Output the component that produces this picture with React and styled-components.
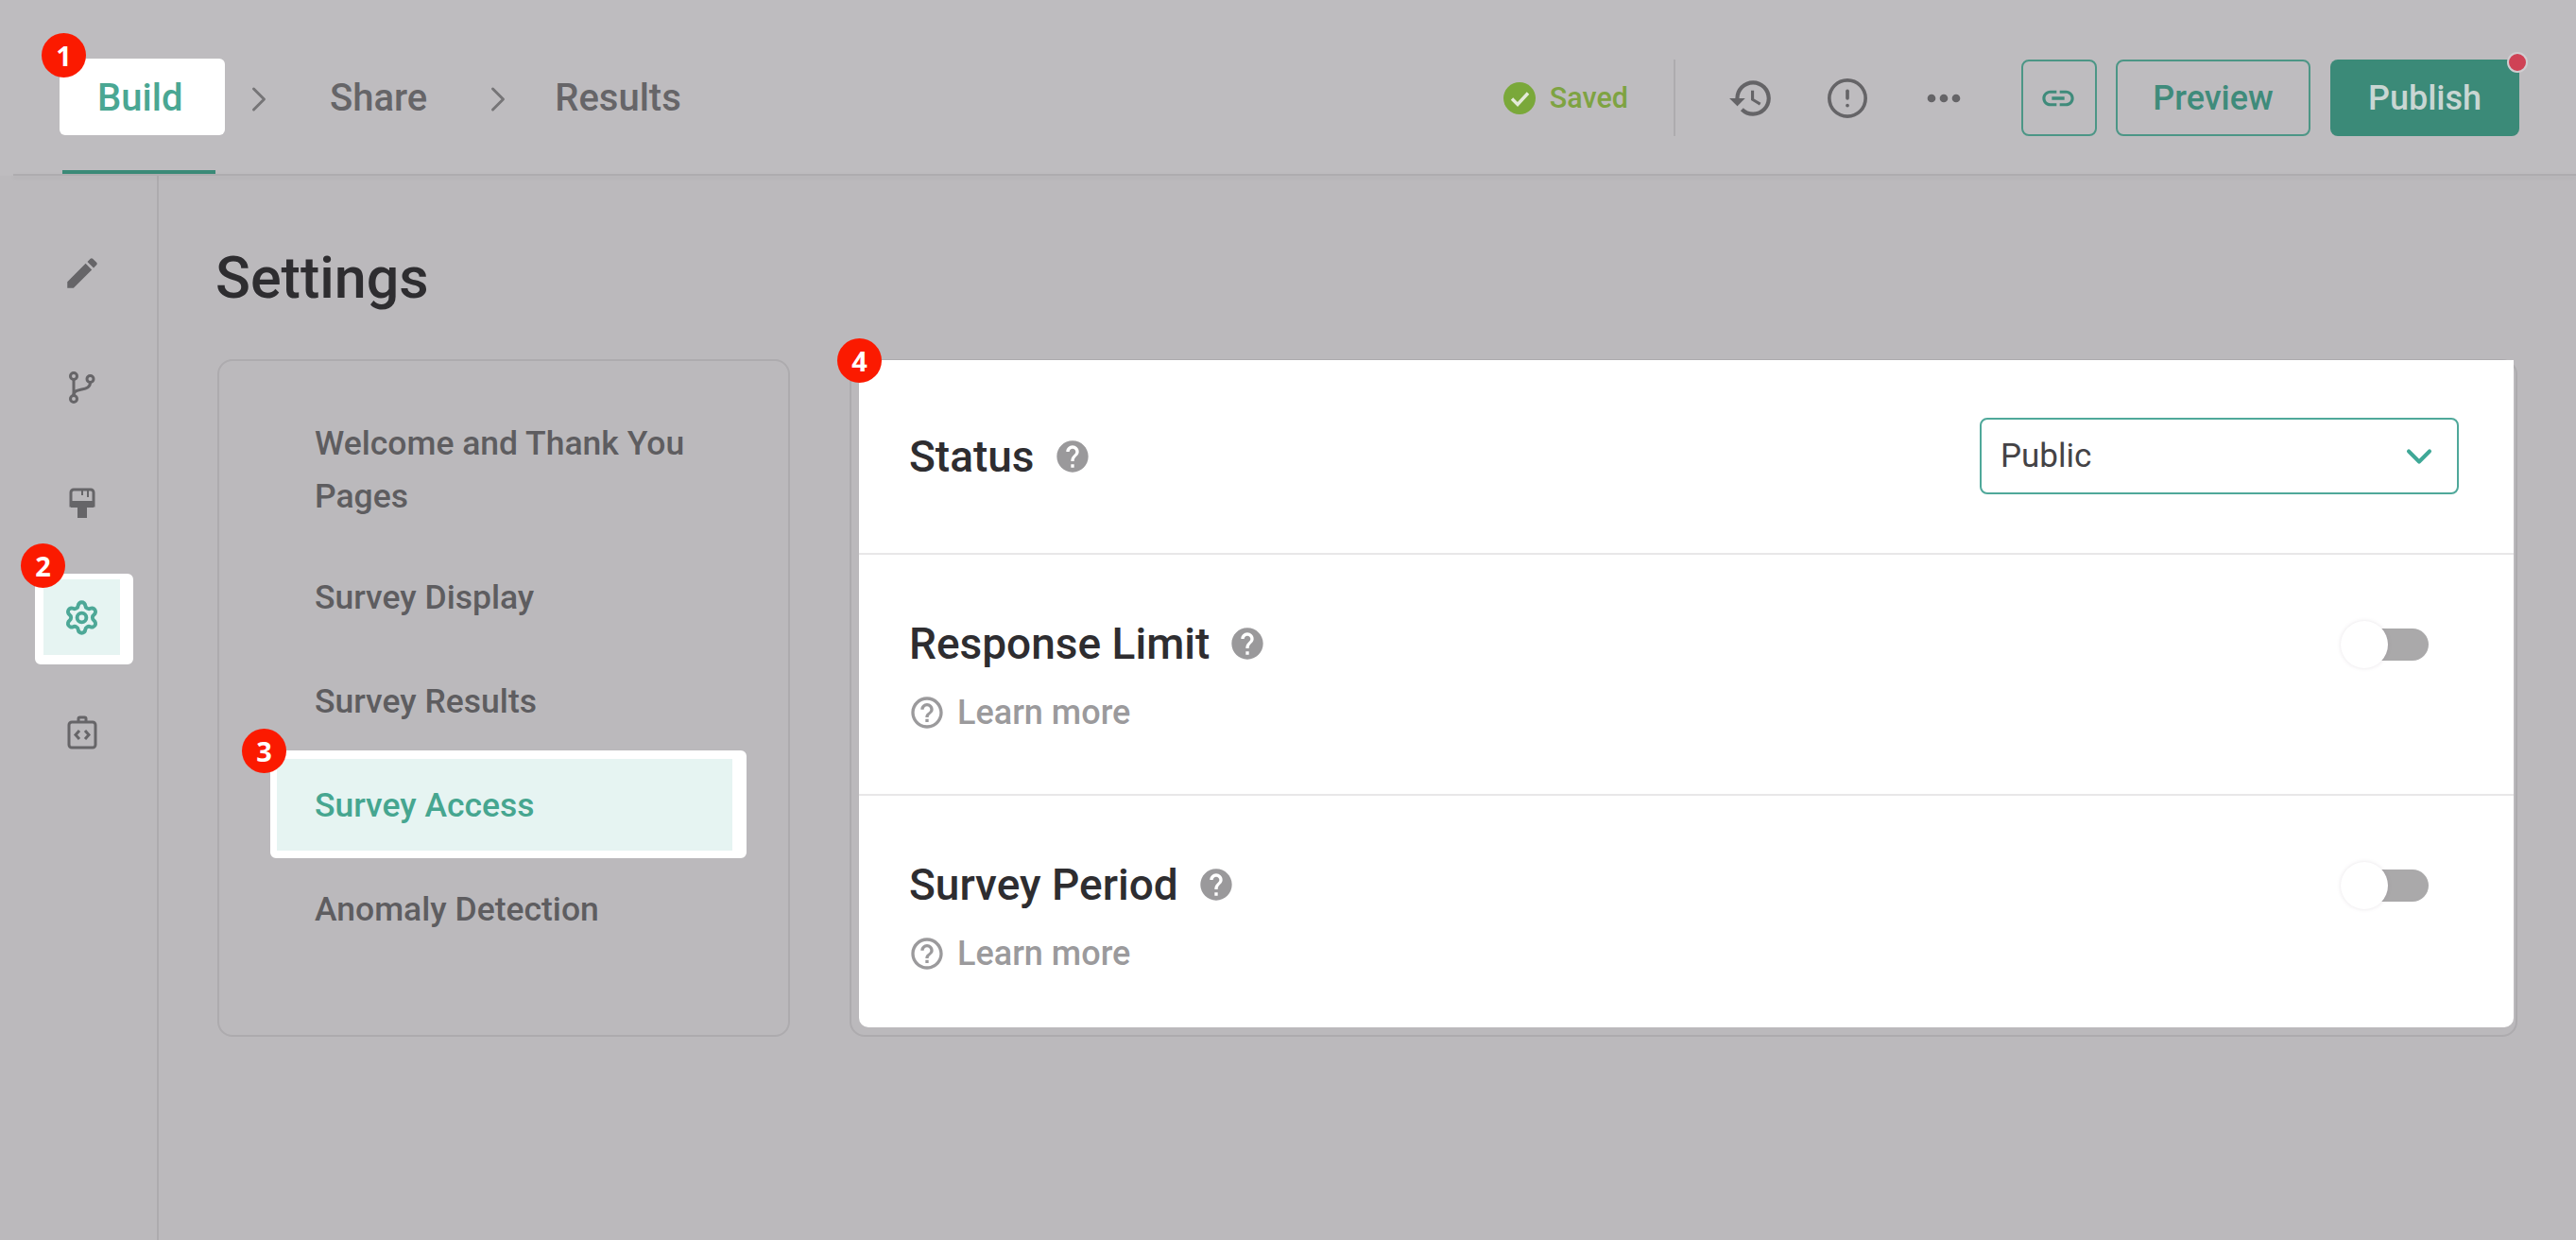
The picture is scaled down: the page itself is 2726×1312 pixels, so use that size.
import React from "react";
import styled, { createGlobalStyle } from "styled-components";
import { ChevronRight, ChevronDown, CircleAlert, Settings as SettingsGear } from "lucide-react";
import { MdEdit, MdHistory, MdMoreHoriz, MdLink, MdHelp, MdHelpOutline } from "react-icons/md";

const Global = createGlobalStyle`
  html, body { margin: 0; padding: 0; background: #bbb9bc; }
  body { font-family: Roboto, "Liberation Sans", sans-serif; width: 2726px; height: 1312px; overflow: hidden; }
  * { box-sizing: border-box; }
`;

const Page = styled.div`
  width: 2726px;
  height: 1312px;
  display: flex;
  flex-direction: column;
  background: #bbb9bc;
`;

const Header = styled.header`
  position: relative;
  height: 186px;
  padding: 62px 60px 0 63px;
  display: flex;
  align-items: flex-start;
  flex-shrink: 0;
  background: #bebcbf;
  &::after {
    content: "";
    position: absolute;
    left: 14px;
    right: 0;
    bottom: 0;
    height: 2px;
    background: #aeacaf;
    box-shadow: 0 2px 5px rgba(0, 0, 0, 0.06);
  }
`;

const Badge = styled.span`
  position: absolute;
  left: ${(p) => p.$left}px;
  top: ${(p) => p.$top}px;
  width: 47px;
  height: 47px;
  border-radius: 50%;
  background: #fb1a00;
  color: #fff;
  font-family: "Open Sans", sans-serif;
  font-size: 29px;
  font-weight: 700;
  display: flex;
  align-items: center;
  justify-content: center;
  z-index: 3;
`;

const ActiveStep = styled.div`
  position: relative;
  width: 175px;
  height: 81px;
  padding: 2px 0 0 40px;
  background: #fff;
  border-radius: 6px;
  display: flex;
  align-items: center;
  color: #4aa793;
  font-size: 40px;
  font-weight: 500;
  &::after {
    content: "";
    position: absolute;
    left: 3px;
    top: 118px;
    width: 162px;
    height: 4px;
    background: #3b8a78;
  }
`;

const Step = styled.div`
  height: 81px;
  padding-top: 2px;
  margin-left: ${(p) => p.$left}px;
  display: flex;
  align-items: center;
  color: #666568;
  font-size: 40px;
  font-weight: 500;
`;

const StepChevron = styled(ChevronRight)`
  flex-shrink: 0;
  margin-top: 21px;
  margin-left: ${(p) => p.$left}px;
  color: #767577;
`;

const Actions = styled.div`
  margin-left: auto;
  margin-top: 1px;
  height: 81px;
  display: flex;
  align-items: center;
`;

const SavedIcon = styled.svg`
  width: 34px;
  height: 34px;
  flex-shrink: 0;
`;

const SavedLabel = styled.span`
  margin-left: 15px;
  color: #7ea342;
  font-size: 30.5px;
  font-weight: 500;
`;

const VDivider = styled.span`
  width: 2px;
  height: 81px;
  margin: 0 29.5px 0 47.5px;
  background: #adabae;
`;

const ToolSlot = styled.span`
  width: 102px;
  display: flex;
  align-items: center;
  justify-content: center;
  color: #656467;
`;

const OutlineButton = styled.button`
  width: ${(p) => p.$width}px;
  height: 81px;
  margin-left: ${(p) => p.$left}px;
  padding: ${(p) => (p.$icon ? "0 3px 0 0" : "0")};
  border: 2px solid #4c9686;
  border-radius: 8px;
  background: transparent;
  color: #3f8b7b;
  font-family: inherit;
  font-size: 36px;
  font-weight: 500;
  display: flex;
  align-items: center;
  justify-content: center;
`;

const PublishButton = styled.button`
  position: relative;
  width: 200px;
  height: 81px;
  margin-left: 21px;
  padding: 0;
  border: 0;
  border-radius: 8px;
  background: #3b8a78;
  color: #c9d6d3;
  font-family: inherit;
  font-size: 36px;
  font-weight: 500;
  &::after {
    content: "";
    position: absolute;
    left: 187px;
    top: -8px;
    width: 18px;
    height: 18px;
    border-radius: 50%;
    background: #cf4255;
    border: 2px solid #d0ced1;
  }
`;

const Body = styled.div`
  flex: 1;
  display: flex;
  min-height: 0;
`;

const Sidebar = styled.nav`
  width: 168px;
  flex-shrink: 0;
  padding: 42px 0 0 37px;
  border-right: 2px solid #adabae;
  display: flex;
  flex-direction: column;
`;

const SideSlot = styled.div`
  width: 99px;
  height: 121.5px;
  display: flex;
  align-items: center;
  justify-content: center;
  color: #666568;
  flex-shrink: 0;
`;

const SideTile = styled.div`
  position: relative;
  box-sizing: content-box;
  width: 81px;
  height: 80px;
  flex-shrink: 0;
  margin: 4px 0 0 5px;
  border-style: solid;
  border-width: 6px 14px 10px 9px;
  border-color: #fff;
  border-radius: 6px;
  background: #e6f4f2;
  background-clip: padding-box;
  color: #4da897;
  display: flex;
  align-items: center;
  justify-content: center;
`;

const Main = styled.main`
  flex: 1;
  padding-left: 62px;
  min-width: 0;
`;

const Title = styled.h1`
  margin: 78px 0 55.5px -2px;
  font-size: 61px;
  line-height: 60px;
  font-weight: 500;
  color: #2e2d30;
`;

const Columns = styled.div`
  display: flex;
  align-items: flex-start;
`;

const SectionNav = styled.div`
  width: 606px;
  height: 717px;
  padding: 37.5px 0 0 61px;
  border: 2px solid #adabae;
  border-radius: 16px;
  flex-shrink: 0;
`;

const NavItem = styled.div`
  width: 482px;
  padding: 21.5px 40px;
  margin-bottom: ${(p) => (p.$tall ? 9 : 13)}px;
  font-size: 35.5px;
  line-height: ${(p) => (p.$tall ? 56 : 54)}px;
  font-weight: 500;
  color: #5e5d60;
`;

const ActiveNavItem = styled.div`
  position: relative;
  box-sizing: content-box;
  width: 442px;
  height: 97px;
  margin: -9px 0 5px -7px;
  padding-left: 40px;
  border-style: solid;
  border-width: 9px 15px 8px 7px;
  border-color: #fff;
  border-radius: 6px;
  background: #e6f4f2;
  background-clip: padding-box;
  display: flex;
  align-items: center;
  font-size: 35.5px;
  line-height: 54px;
  font-weight: 500;
  color: #46a690;
`;

const CardFrame = styled.div`
  position: relative;
  width: 1765px;
  height: 717px;
  margin-left: 63px;
  padding: 1px 3px 5.5px 9px;
  border: 2px solid #adabae;
  border-radius: 16px;
  flex-shrink: 0;
`;

const Card = styled.section`
  height: 100%;
  margin: -2px -1px 0 -1px;
  background: #fff;
  border-radius: 0 0 10px 10px;
  display: flex;
  flex-direction: column;
`;

const Row = styled.div`
  height: ${(p) => p.$height}px;
  padding: ${(p) => (p.$center ? 0 : 67)}px 58px 0 53px;
  display: flex;
  justify-content: space-between;
  align-items: ${(p) => (p.$center ? "center" : "flex-start")};
  border-bottom: ${(p) => (p.$last ? "0" : "2px solid #e8e7e8")};
  flex-shrink: 0;
`;

const RowTitle = styled.div`
  display: flex;
  align-items: center;
  gap: 20px;
  height: 54px;
  color: #2e2d30;
  font-size: 46px;
  font-weight: 500;
`;

const HelpDot = styled(MdHelp)`
  color: #9a999b;
  flex-shrink: 0;
`;

const LearnMore = styled.div`
  display: flex;
  align-items: center;
  gap: 12px;
  height: 40px;
  margin: 26px 0 0 -1px;
  color: #9b9a9c;
  font-size: 36px;
  font-weight: 500;
`;

const SelectBox = styled.div`
  width: 507px;
  height: 81px;
  padding: 0 18px 0 20px;
  border: 2px solid #4fa89a;
  border-radius: 8px;
  display: flex;
  align-items: center;
  justify-content: space-between;
  color: #444346;
  font-size: 35px;
`;

const SwitchTrack = styled.div`
  position: relative;
  width: 93px;
  height: 50px;
  margin: 2.5px 32px 0 0;
  flex-shrink: 0;
  &::before {
    content: "";
    position: absolute;
    right: 0;
    top: 8px;
    width: 70px;
    height: 34px;
    border-radius: 17px;
    background: #aaa9aa;
  }
  &::after {
    content: "";
    position: absolute;
    left: 0;
    top: 0;
    width: 50px;
    height: 50px;
    border-radius: 50%;
    background: #fff;
    box-shadow: 0 0 4px rgba(120, 100, 120, 0.18);
  }
`;

function BranchIcon() {
  return (
    <svg width="30" height="34" viewBox="0 0 30 34" fill="none" stroke="currentColor" strokeWidth="3">
      <circle cx="6" cy="5" r="3.5" />
      <circle cx="6" cy="29" r="3.5" />
      <circle cx="23.5" cy="8" r="3.5" />
      <path d="M6 8.5V25.5" />
      <path d="M23.5 11.5C23.5 17 19 18 14.5 19C10 20 6 20.5 6 25" />
    </svg>
  );
}

function BrushIcon() {
  return (
    <svg width="28" height="34" viewBox="0 0 28 34" fill="none">
      <path d="M2 6a3 3 0 0 1 3-3h18a3 3 0 0 1 3 3v14H2z" stroke="currentColor" strokeWidth="3" />
      <rect x="2" y="15" width="24" height="7" fill="currentColor" />
      <path d="M14 4v5M20 4v7" stroke="currentColor" strokeWidth="2" />
      <rect x="9" y="22" width="10" height="11" fill="currentColor" />
    </svg>
  );
}

function CodeClipIcon() {
  return (
    <svg width="32" height="36" viewBox="0 0 32 36" fill="none" stroke="currentColor" strokeWidth="3">
      <rect x="2" y="7" width="28" height="27" rx="3" />
      <path d="M12 7V3.5a1.5 1.5 0 0 1 1.5-1.5h5A1.5 1.5 0 0 1 20 3.5V7" />
      <path d="M13 16l-4 4.5 4 4.5M19 16l4 4.5-4 4.5" />
    </svg>
  );
}

function CheckCircle() {
  return (
    <SavedIcon viewBox="0 0 34 34">
      <circle cx="17" cy="17" r="17" fill="#7aa83a" />
      <path d="M9 17.5l6 6 11-12" fill="none" stroke="#e4ead8" strokeWidth="3.4" />
    </SavedIcon>
  );
}

function SettingRow({ title, height, last }) {
  return (
    <Row $height={height} $last={last}>
      <div>
        <RowTitle>
          {title}
          <HelpDot size={40} />
        </RowTitle>
        <LearnMore>
          <MdHelpOutline size={40} />
          Learn more
        </LearnMore>
      </div>
      <SwitchTrack />
    </Row>
  );
}

export default function App() {
  return (
    <Page>
      <Global />
      <Header>
        <ActiveStep>
          <Badge $left={-19} $top={-27}>1</Badge>
          Build
        </ActiveStep>
        <StepChevron size={44} strokeWidth={1.6} $left={14} />
        <Step $left={53}>Share</Step>
        <StepChevron size={44} strokeWidth={1.6} $left={53} />
        <Step $left={38}>Results</Step>
        <Actions>
          <CheckCircle />
          <SavedLabel>Saved</SavedLabel>
          <VDivider />
          <ToolSlot><MdHistory size={50} /></ToolSlot>
          <ToolSlot><CircleAlert size={46} strokeWidth={1.9} /></ToolSlot>
          <ToolSlot><MdMoreHoriz size={52} /></ToolSlot>
          <OutlineButton $width={80} $left={31} $icon><MdLink size={40} /></OutlineButton>
          <OutlineButton $width={206} $left={20}>Preview</OutlineButton>
          <PublishButton>Publish</PublishButton>
        </Actions>
      </Header>
      <Body>
        <Sidebar>
          <SideSlot><MdEdit size={42} /></SideSlot>
          <SideSlot><BranchIcon /></SideSlot>
          <SideSlot><BrushIcon /></SideSlot>
          <SideSlot>
            <SideTile>
              <Badge $left={-24} $top={-38}>2</Badge>
              <SettingsGear size={39} strokeWidth={2.4} />
            </SideTile>
          </SideSlot>
          <SideSlot><CodeClipIcon /></SideSlot>
        </Sidebar>
        <Main>
          <Title>Settings</Title>
          <Columns>
            <SectionNav>
              <NavItem $tall>Welcome and Thank You Pages</NavItem>
              <NavItem>Survey Display</NavItem>
              <NavItem>Survey Results</NavItem>
              <ActiveNavItem>
                <Badge $left={-37} $top={-32}>3</Badge>
                Survey Access
              </ActiveNavItem>
              <NavItem>Anomaly Detection</NavItem>
            </SectionNav>
            <CardFrame>
              <Badge $left={-15} $top={-24}>4</Badge>
              <Card>
                <Row $height={206.5} $center>
                  <RowTitle>
                    Status
                    <HelpDot size={40} />
                  </RowTitle>
                  <SelectBox>
                    Public
                    <ChevronDown size={44} strokeWidth={2.2} color="#3fa897" />
                  </SelectBox>
                </Row>
                <SettingRow title="Response Limit" height={255} />
                <SettingRow title="Survey Period" height={244.5} last />
              </Card>
            </CardFrame>
          </Columns>
        </Main>
      </Body>
    </Page>
  );
}
